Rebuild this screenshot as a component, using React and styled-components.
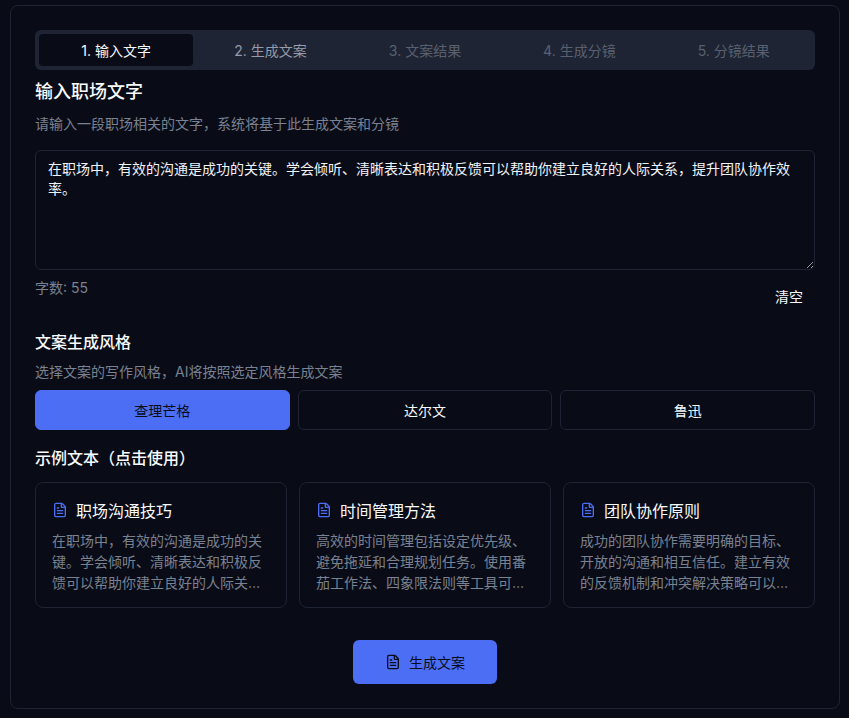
import React, { useState } from "react";
import styled, { createGlobalStyle } from "styled-components";
import { FileText } from "lucide-react";

const GlobalStyle = createGlobalStyle`
  * {
    box-sizing: border-box;
  }
  html, body {
    margin: 0;
    background: #090c17;
    color: #f8fafc;
    font-family: Inter, "Noto Sans CJK SC", sans-serif;
    font-size: 14px;
  }
`;

const Page = styled.div`
  padding: 5px 9px 9px 10px;
`;

const Panel = styled.div`
  display: flex;
  flex-direction: column;
  padding: 24px;
  border: 1px solid #1e2433;
  border-radius: 8px;
  background: #090c17;
`;

const TabList = styled.div`
  display: grid;
  grid-template-columns: repeat(5, 1fr);
  height: 40px;
  padding: 4px;
  border-radius: 6px;
  background: #1e2433;
`;

const Tab = styled.div`
  display: flex;
  align-items: center;
  justify-content: center;
  border-radius: 4px;
  font-size: 14px;
  font-weight: 400;
  background: ${(p) => (p.$active ? "#090c17" : "transparent")};
  color: ${(p) => (p.$active ? "#f8fafc" : "#949baa")};
  opacity: ${(p) => (p.$disabled ? 0.5 : 1)};
`;

const Title = styled.h2`
  margin: 10px 0 0;
  font-size: 18px;
  line-height: 24px;
  font-weight: 500;
`;

const Hint = styled.p`
  margin: ${(p) => p.$margin};
  font-size: 14px;
  line-height: 20px;
  color: #7a8190;
`;

const TextBox = styled.textarea`
  display: block;
  width: 100%;
  height: 120px;
  margin: 0;
  padding: 8px 12px;
  border: 1px solid #1e2433;
  border-radius: 6px;
  background: #090c17;
  color: #f1f3f7;
  font-family: inherit;
  font-size: 14px;
  line-height: 20px;
  outline: none;
  resize: vertical;
`;

const CountRow = styled.div`
  display: flex;
  align-items: flex-start;
  justify-content: space-between;
  margin-top: 8px;
`;

const Count = styled.span`
  font-size: 14px;
  line-height: 20px;
  color: #7a8190;
`;

const GhostButton = styled.button`
  height: 36px;
  padding: 0 12px;
  border: 0;
  border-radius: 6px;
  background: transparent;
  color: #f8fafc;
  font-family: inherit;
  font-size: 14px;
  font-weight: 400;
`;

const SectionTitle = styled.h3`
  margin: ${(p) => p.$margin};
  font-size: 16px;
  line-height: 24px;
  font-weight: 500;
`;

const StyleRow = styled.div`
  display: grid;
  grid-template-columns: repeat(3, 1fr);
  gap: 8px;
`;

const StyleButton = styled.button`
  height: 40px;
  border: 1px solid ${(p) => (p.$selected ? "#4c6ef5" : "#1e2433")};
  border-radius: 6px;
  background: ${(p) => (p.$selected ? "#4c6ef5" : "#090c17")};
  color: ${(p) => (p.$selected ? "#090c17" : "#f8fafc")};
  font-family: inherit;
  font-size: 14px;
  font-weight: 400;
`;

const CardGrid = styled.div`
  display: grid;
  grid-template-columns: repeat(3, 1fr);
  gap: 12px;
  margin-top: 12px;
`;

const SampleCard = styled.div`
  height: 126px;
  padding: 16px;
  border: 1px solid #1e2433;
  border-radius: 8px;
  background: #090c17;
`;

const CardHead = styled.div`
  display: flex;
  align-items: center;
  gap: 8px;
  height: 24px;
  margin-top: -1px;
  color: #f8fafc;
  font-size: 16px;
  font-weight: 400;

  svg {
    flex: none;
    color: #4c6ef5;
  }
`;

const CardText = styled.p`
  display: -webkit-box;
  margin: 8px 0 0;
  overflow: hidden;
  font-size: 14px;
  line-height: 21px;
  color: #7a8190;
  -webkit-box-orient: vertical;
  -webkit-line-clamp: 3;
`;

const Footer = styled.div`
  display: flex;
  justify-content: center;
  margin-top: 32px;
`;

const PrimaryButton = styled.button`
  display: flex;
  align-items: center;
  justify-content: center;
  gap: 8px;
  width: 144px;
  height: 44px;
  border: 0;
  border-radius: 6px;
  background: #4c6ef5;
  color: #090c17;
  font-family: inherit;
  font-size: 14px;
  font-weight: 400;
`;

const steps = ["1. 输入文字", "2. 生成文案", "3. 文案结果", "4. 生成分镜", "5. 分镜结果"];
const writers = ["查理芒格", "达尔文", "鲁迅"];
const samples = [
  {
    title: "职场沟通技巧",
    text: "在职场中，有效的沟通是成功的关键。学会倾听、清晰表达和积极反馈可以帮助你建立良好的人际关系，提升团队协作效率。",
  },
  {
    title: "时间管理方法",
    text: "高效的时间管理包括设定优先级、避免拖延和合理规划任务。使用番茄工作法、四象限法则等工具可以帮助你提高工作效率。",
  },
  {
    title: "团队协作原则",
    text: "成功的团队协作需要明确的目标、开放的沟通和相互信任。建立有效的反馈机制和冲突解决策略可以增强团队凝聚力。",
  },
];

function App() {
  const [text, setText] = useState(samples[0].text);

  return (
    <Page>
      <GlobalStyle />
      <Panel>
        <TabList>
          {steps.map((step, i) => (
            <Tab key={step} $active={i === 0} $disabled={i > 1}>
              {step}
            </Tab>
          ))}
        </TabList>

        <Title>输入职场文字</Title>
        <Hint $margin="10px 0 16px">请输入一段职场相关的文字，系统将基于此生成文案和分镜</Hint>
        <TextBox value={text} onChange={(e) => setText(e.target.value)} />
        <CountRow>
          <Count>字数: {text.length}</Count>
          <GhostButton onClick={() => setText("")}>清空</GhostButton>
        </CountRow>

        <SectionTitle $margin="16px 0 0">文案生成风格</SectionTitle>
        <Hint $margin="8px 0 8px">选择文案的写作风格，AI将按照选定风格生成文案</Hint>
        <StyleRow>
          {writers.map((name, i) => (
            <StyleButton key={name} $selected={i === 0}>
              {name}
            </StyleButton>
          ))}
        </StyleRow>

        <SectionTitle $margin="16px 0 0">示例文本（点击使用）</SectionTitle>
        <CardGrid>
          {samples.map((s) => (
            <SampleCard key={s.title}>
              <CardHead>
                <FileText size={16} />
                {s.title}
              </CardHead>
              <CardText>{s.text}</CardText>
            </SampleCard>
          ))}
        </CardGrid>

        <Footer>
          <PrimaryButton>
            <FileText size={16} />
            生成文案
          </PrimaryButton>
        </Footer>
      </Panel>
    </Page>
  );
}

export default App;
